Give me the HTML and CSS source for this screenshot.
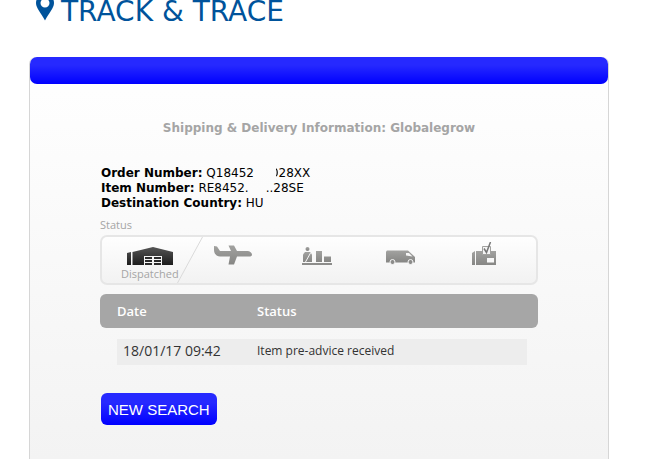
FILE: index.html
```html
<!DOCTYPE html>
<html lang="en">
<head>
    <meta charset="UTF-8">
    <meta name="viewport" content="width=device-width, initial-scale=1.0">
    <title>Track &amp; Trace</title>
    <link rel="stylesheet" href="styles.css">
</head>
<body>
    <h1 class="page-title">
        <svg class="pin" width="18" height="21" viewBox="0 0 18 21" fill="#00539b">
            <path fill-rule="evenodd" d="M9-6a9 9 0 0 0-9 9c0 5 5 10 9 17.500 4-7.500 9-12.500 9-17.500a9 9 0 0 0-9-9zm0 4.500a4.500 4.500 0 1 1 0 9 4.500 4.500 0 0 1 0-9z"/>
        </svg>
        TRACK &amp; TRACE
    </h1>

    <main class="panel">
        <div class="panel-bar"></div>

        <div class="panel-content">
            <h2 class="subtitle">Shipping &amp; Delivery Information: Globalegrow</h2>

            <div class="order-info">
                <div><strong>Order Number:</strong> Q18452<span class="hidden-digits"></span><span class="half-digit">0</span>28XX</div>
                <div><strong>Item Number:</strong> RE8452.<span class="hidden-digits"></span>..28SE</div>
                <div><strong>Destination Country:</strong> HU</div>
            </div>

            <div class="tracker-label">Status</div>
            <div class="tracker">
                <svg class="divider" width="26" height="46" viewBox="0 0 26 46" fill="none" stroke="#dadada">
                    <path d="M25.500 0L.5 46"/>
                </svg>
                <div class="step">
                    <svg width="46" height="18" viewBox="0 0 46 18">
                        <defs>
                            <linearGradient id="dark" x1="0" y1="0" x2="0" y2="1">
                                <stop offset="0" stop-color="#555"/>
                                <stop offset="1" stop-color="#1c1c1c"/>
                            </linearGradient>
                        </defs>
                        <path fill="url(#dark)" d="M0 6l4-1v13H0zM5.500 5L26 0l20 5v13H5.500z"/>
                        <path fill="#f5f5f5" d="M17 9h18v9H17z"/>
                        <path fill="#2b2b2b" d="M18 10h7v2h-7zM27 10h7v2h-7zM18 13h7v2h-7zM27 13h7v2h-7zM18 16h7v2h-7zM27 16h7v2h-7z"/>
                    </svg>
                    <span class="step-name">Dispatched</span>
                </div>
                <div class="step">
                    <svg width="38" height="20" viewBox="0 0 38 20">
                        <defs>
                            <linearGradient id="grey" x1="0" y1="0" x2="0" y2="1">
                                <stop offset="0" stop-color="#a2a2a0"/>
                                <stop offset="1" stop-color="#868684"/>
                            </linearGradient>
                        </defs>
                        <path fill="url(#grey)" d="M0 1l3 .5L6 6h11L14.500 0.500H20L23 6h11c2.500.5 4 2 4 3.500S37 11.500 35 11.500H23L20 19.500h-5.500L16 11.500H6C2 11 0 8.500 0 5z"/>
                    </svg>
                </div>
                <div class="step">
                    <svg width="30" height="18" viewBox="0 0 30 18" fill="url(#grey)">
                        <circle cx="5.500" cy="2" r="2"/>
                        <path d="M3 5h5l2 2.500V15H1V7.500z"/>
                        <path d="M14 4h6v11h-6zM22 9.500h7V15h-7z"/>
                        <path fill="#8c8c8a" d="M0 16h30v2H0z"/>
                        <path stroke="#f7f7f7" d="M8.500 6L3.500 15"/>
                    </svg>
                </div>
                <div class="step">
                    <svg width="30" height="15" viewBox="0 0 30 15">
                        <path fill="url(#grey)" d="M1 0.500h21l7 6.500v5.500H0V1.500z"/>
                        <path fill="#f5f5f5" d="M20 3h3l3.500 3.500L20 5.500z"/>
                        <g fill="#8c8c8a" stroke="#f5f5f5">
                            <circle cx="6.500" cy="12" r="2.500"/>
                            <circle cx="24.500" cy="12" r="2.500"/>
                        </g>
                    </svg>
                </div>
                <div class="step">
                    <svg width="24" height="23" viewBox="0 0 24 23">
                        <path fill="url(#grey)" d="M0 11l3-2v14H0zM4 9h20v14H4z"/>
                        <path fill="#f5f5f5" stroke="#a0a09e" d="M10.500 4.500h8v8h-8z"/>
                        <path fill="#f8f8f8" d="M15 16h7v4.500h-7z"/>
                        <path fill="none" stroke="#777" stroke-width="1.500" d="M12 6.500l2.500 4L18.500 0"/>
                    </svg>
                </div>
            </div>

            <table class="events">
                <thead>
                    <tr>
                        <th class="date">Date</th>
                        <th>Status</th>
                    </tr>
                </thead>
                <tbody>
                    <tr>
                        <td class="date">18/01/17 09:42</td>
                        <td>Item pre-advice received</td>
                    </tr>
                </tbody>
            </table>

            <button type="button" class="search-button">NEW SEARCH</button>
        </div>
    </main>
</body>
</html>
```
FILE: styles.css
```css
* {
    margin: 0;
    padding: 0;
    box-sizing: border-box;
}

body {
    min-height: 100vh;
    display: flex;
    flex-direction: column;
    background: #fff;
    color: #000;
    font-family: Verdana, "DejaVu Sans", sans-serif;
    font-size: 12px;
    overflow: hidden;
}

.page-title {
    display: flex;
    align-items: flex-start;
    gap: 7px;
    margin: 0 36px 34px;
    color: #00539b;
    font-size: 28px;
    font-weight: normal;
    line-height: 23px;
}

.pin {
    flex: none;
}

/* Panel */
.panel {
    flex: 1;
    margin: 0 48px 0 29px;
    border: solid #d6d6d6;
    border-width: 0 1px;
    border-radius: 7px 7px 0 0;
    background: linear-gradient(#fff, #f3f3f3);
}

.panel-bar {
    height: 27px;
    border-radius: 7px;
    background: linear-gradient(#2629ff 30%, #0000ff);
}

.panel-content {
    padding: 37px 70px 33px;
}

.subtitle {
    margin-bottom: 30px;
    color: #a5a5a5;
    font-size: 12px;
    line-height: 15px;
    text-align: center;
}

.order-info {
    margin-bottom: 7px;
    padding-left: 1px;
    line-height: 15px;
}

.hidden-digits {
    display: inline-block;
    width: 17px;
}

.half-digit {
    background: linear-gradient(90deg, transparent 60%, #000 60%);
    -webkit-background-clip: text;
    background-clip: text;
    color: transparent;
}

/* Progress tracker */
.tracker-label,
.step-name {
    color: #a5a5a5;
    font-family: "Open Sans", sans-serif;
    font-size: 11px;
    line-height: 14px;
}

.tracker {
    position: relative;
    display: flex;
    height: 50px;
    margin-top: 3px;
    padding: 0 10px 0 6px;
    border: 2px solid #e6e6e6;
    border-radius: 7px;
    background: linear-gradient(#fefefe, #f2f2f2);
}

.divider {
    position: absolute;
    top: 0;
    left: 75px;
}

.step {
    flex: 1;
    display: flex;
    flex-direction: column;
    align-items: center;
}

.step svg {
    flex: none;
    margin-top: auto;
}

.step::after {
    content: "";
    height: 18px;
}

.step:has(.step-name)::after {
    height: 2px;
}

.step-name {
    margin-top: 2px;
}

/* Events */
.events {
    width: 100%;
    margin: 9px 0 28px;
    border-collapse: separate;
    border-spacing: 0;
    font-family: "Open Sans", sans-serif;
    text-align: left;
}

.events .date {
    width: 140px;
}

.events th {
    height: 34px;
    padding-left: 17px;
    background: #a6a6a6;
    color: #fff;
    font-size: 13px;
    font-weight: 600;
}

.events th:first-child {
    border-radius: 6px 0 0 6px;
}

.events th:last-child {
    border-radius: 0 6px 6px 0;
}

.events td {
    height: 37px;
    padding: 0 0 3px 17px;
    border-top: 11px solid transparent;
    background: #ededed;
    background-clip: padding-box;
    color: #333;
    font-size: 12px;
    line-height: 18px;
}

.events td.date {
    padding-left: 6px;
    border-left: 17px solid transparent;
    font-size: 14px;
}

.events td:last-child {
    border-right: 11px solid transparent;
}

.search-button {
    height: 32px;
    margin-left: 1px;
    padding: 0 7px;
    border: none;
    border-radius: 6px;
    background: linear-gradient(#2629ff 30%, #0000ff);
    color: #fff;
    font-family: Arial, "Liberation Sans", sans-serif;
    font-size: 15px;
    cursor: pointer;
}
```
